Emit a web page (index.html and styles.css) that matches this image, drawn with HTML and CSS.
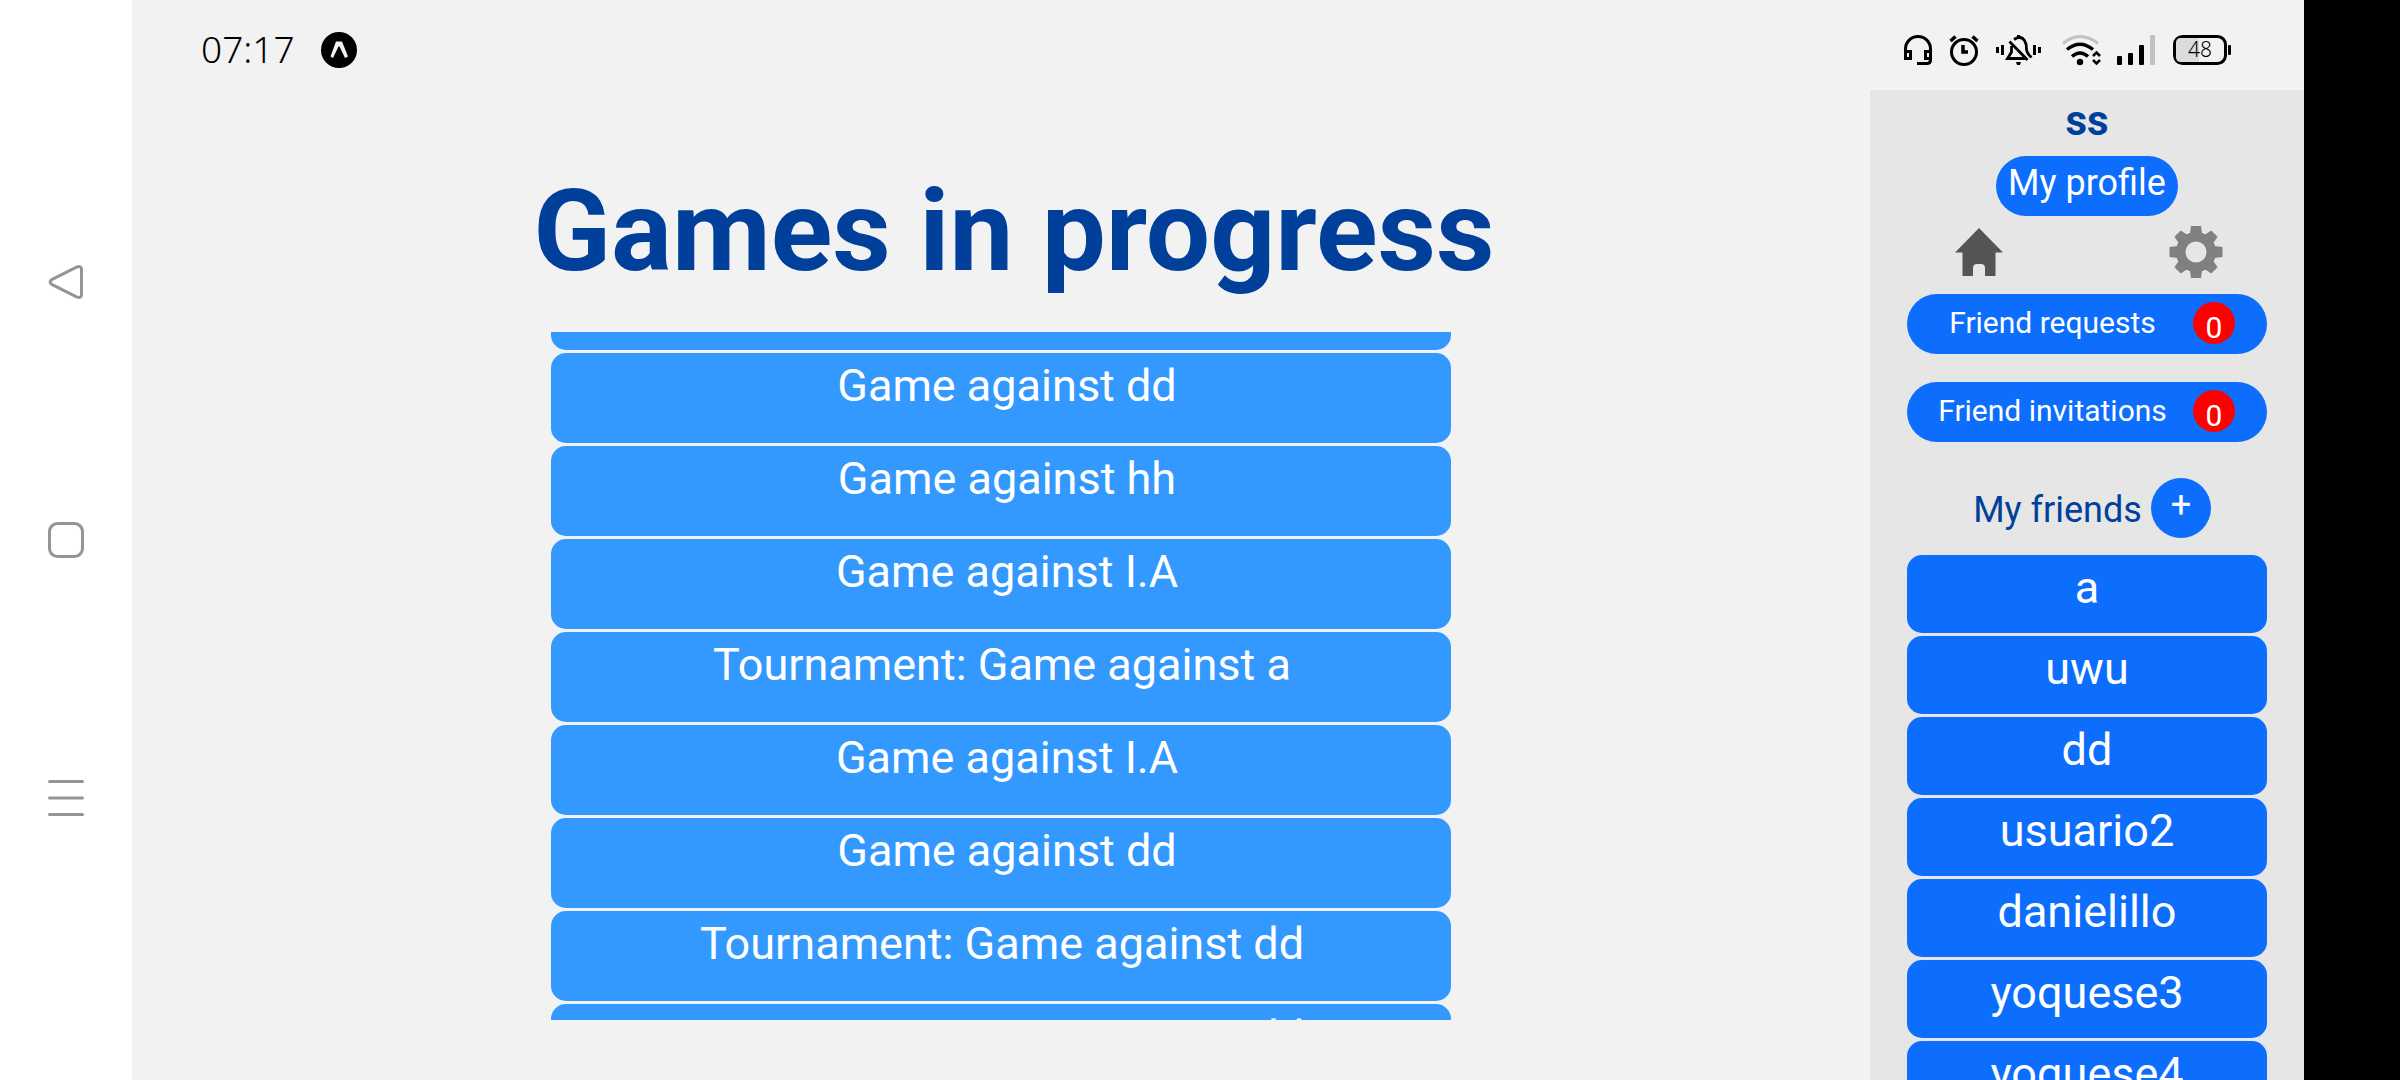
FILE: index.html
```html
<!DOCTYPE html>
<html lang="en">
<head>
<meta charset="utf-8">
<meta name="viewport" content="width=device-width, initial-scale=1">
<title>Games in progress</title>
<link rel="stylesheet" href="styles.css">
</head>
<body>
<div class="device">
  <nav class="system-nav" aria-label="System navigation">
    <button class="system-nav__button" type="button" aria-label="Back">
      <svg width="36" height="36" viewBox="0 0 36 36"><path d="M4.200 15.400 28.500 3.200Q33.500 1.200 33.500 5.500V30.500Q33.500 34.800 28.500 32.800L4.200 20.600Q-.2 18 4.200 15.400Z"/></svg>
    </button>
    <button class="system-nav__button" type="button" aria-label="Home">
      <svg width="36" height="36" viewBox="0 0 36 36"><rect x="1.500" y="1.500" width="33" height="33" rx="8"/></svg>
    </button>
    <button class="system-nav__button" type="button" aria-label="Recent apps">
      <svg width="36" height="36" viewBox="0 0 36 36"><path d="M1.500 1.500h33M1.500 18h33M1.500 34.500h33"/></svg>
    </button>
  </nav>

  <div class="app">
    <header class="status-bar">
      <div class="status-bar__left">
        <span class="status-bar__time">07:17</span>
        <svg width="36" height="36" viewBox="0 0 36 36"><circle cx="18" cy="18" r="18"/><path d="M15 9.500h6L27 24.500 24 26 18.500 14.500h-1L12 26 9.500 24.500Z" fill="#f2f2f2"/></svg>
      </div>
      <svg class="status-bar__icons" width="330" height="36" viewBox="1903 32 330 36" aria-label="Device status">
        <g fill="none" stroke="#000" stroke-width="3">
          <path d="M1905.500 58V49a12 12 0 0 1 25 0V60q0 3-3 3.500H1917"/>
          <path d="M1905.500 51.500h5v7h-5zM1925.500 51.500h5v7h-5z"/>
          <circle cx="1964" cy="52" r="12.500"/>
          <path d="M1963 45v7h5M1950.500 41l5-4.500M1977.500 41l-5-4.500" stroke-width="3.500"/>
          <path d="M1997.500 47v6M2002.500 45v10M2034.500 45v10M2039.500 47v6"/>
          <path d="M2009.500 41.500l18 18.500M2014 39.500q7-4.500 10.500 1 2 3 2 8.500 0 4 5 8.500M2011.500 46v6l-4 6.500H2025" stroke-width="2.800"/>
          <path d="M2063 43.500q17-14 35 0" stroke="#c2c2c2"/>
          <path d="M2067 49.500q13-10.500 26 0M2072 56.500q8-7 16 0" stroke-width="3.500"/>
          <path d="M2093 56l3.500-3.500 3.500 3.500M2093 60l3.500 3.500 3.500-3.500" stroke-width="2.500"/>
          <rect x="2174.500" y="36.500" width="51" height="27" rx="8"/>
        </g>
        <path d="M2016 62h5l-1 3h-3zM2017 35h3v4h-3z"/>
        <circle cx="2080" cy="62" r="3.200"/>
        <rect x="2117" y="56" width="5" height="9" rx="1"/><rect x="2128" y="53" width="5" height="12" rx="1"/><rect x="2139" y="45" width="5" height="20" rx="1"/><rect x="2150" y="35" width="5" height="30" rx="1" fill="#c2c2c2"/>
        <path d="M2199 38h-18q-5 0-5 5v14q0 5 5 5h18z" fill="#dcdcdc"/>
        <rect x="2228" y="45" width="3" height="10" rx="1"/>
        <text class="status-bar__level" x="2200" y="57" text-anchor="middle">48</text>
      </svg>
    </header>

    <main class="games">
      <h1 class="games__title">Games in progress</h1>
      <div class="games__viewport">
        <div class="games__list">
          <button class="game" type="button">Game against dd</button>
          <button class="game" type="button">Game against dd</button>
          <button class="game" type="button">Game against hh</button>
          <button class="game" type="button">Game against I.A</button>
          <button class="game game--tournament" type="button">Tournament: Game against a</button>
          <button class="game" type="button">Game against I.A</button>
          <button class="game" type="button">Game against dd</button>
          <button class="game game--tournament" type="button">Tournament: Game against dd</button>
          <button class="game game--tournament" type="button">Tournament: Game against dd</button>
        </div>
      </div>
    </main>

    <aside class="sidebar">
      <h2 class="sidebar__user">ss</h2>
      <button class="profile" type="button">My profile</button>
      <div class="shortcuts">
        <button class="shortcut" type="button" aria-label="Home">
          <svg width="48" height="48" viewBox="0 0 48 48"><path fill="#555" d="M24 0 48 24.500H40.500V48H30V40q0-4-4-4H22q-4 0-4 4v8H7.500V24.500H0Z"/></svg>
        </button>
        <button class="shortcut" type="button" aria-label="Settings">
          <svg width="54" height="52" viewBox="-27 -26 54 52"><mask id="hub" maskUnits="userSpaceOnUse" x="-30" y="-30" width="60" height="60"><path fill="#fff" d="M-30-30h60v60h-60z"/><circle r="10.500"/></mask><g fill="#808080" mask="url(#hub)"><circle r="20"/><path d="M-5-26H5L6-18V18L5 26H-5L-6 18V-18ZM-26.500-5 -18-6H18L26.500-5V5L18 6H-18L-26.500 5Z"/><path transform="rotate(45)" d="M-4.500-26H4.500L6-18V18L4.500 26H-4.500L-6 18V-18ZM-26-4.500-18-6H18L26-4.500V4.500L18 6H-18L-26 4.500Z"/></g></svg>
        </button>
      </div>
      <div class="requests">
        <button class="request" type="button"><span class="request__label">Friend requests</span><span class="request__count">0</span></button>
        <button class="request" type="button"><span class="request__label">Friend invitations</span><span class="request__count">0</span></button>
      </div>
      <div class="friends-head">
        <h3 class="friends-head__title">My friends</h3>
        <button class="add-friend" type="button" aria-label="Add friend">+</button>
      </div>
      <div class="friends">
        <button class="friend" type="button">a</button>
        <button class="friend" type="button">uwu</button>
        <button class="friend" type="button">dd</button>
        <button class="friend" type="button">usuario2</button>
        <button class="friend" type="button">danielillo</button>
        <button class="friend" type="button">yoquese3</button>
        <button class="friend" type="button">yoquese4</button>
      </div>
    </aside>
  </div>
</div>
</body>
</html>
```
FILE: styles.css
```css
* {
  box-sizing: border-box;
}

body {
  margin: 0;
  background: #000;
  font-family: Roboto, "Liberation Sans", sans-serif;
}

button {
  margin: 0;
  padding: 0;
  border: 0;
  background: none;
  color: #fff;
  font: inherit;
  cursor: pointer;
}

svg {
  display: block;
}

h1,
h2,
h3 {
  margin: 0;
  color: #00409a;
}

.device {
  display: flex;
  height: 100vh;
  padding-right: 96px;
  overflow: hidden;
}

.system-nav {
  display: flex;
  flex: none;
  flex-direction: column;
  align-items: center;
  justify-content: center;
  gap: 174px;
  width: 132px;
  background: #fff;
}

.system-nav__button {
  padding: 24px;
}

.system-nav svg {
  fill: none;
  stroke: #959595;
  stroke-width: 3;
  stroke-linecap: round;
}

.app {
  display: grid;
  flex: 1;
  grid-template: 90px minmax(0, 1fr) / minmax(0, 1fr) 434px;
  min-width: 0;
  background: #f2f2f2;
}

.status-bar {
  display: flex;
  grid-column: 1 / -1;
  align-items: center;
  justify-content: space-between;
  padding: 10px 71px 0 69px;
}

.status-bar__left {
  display: flex;
  align-items: center;
  gap: 26px;
}

.status-bar__time {
  padding-bottom: 2px;
  font-family: "Noto Sans", sans-serif;
  font-size: 37px;
  font-weight: 300;
  line-height: 36px;
}

.status-bar__level {
  font-family: "Noto Sans", sans-serif;
  font-size: 21px;
  font-weight: 300;
}

.games {
  display: flex;
  flex-direction: column;
  align-items: center;
  min-height: 0;
  padding: 74px 24px 60px;
}

.games__title {
  padding-left: 26px;
  font-size: 114px;
  line-height: 134px;
}

.games__viewport {
  flex: 1;
  width: 100%;
  max-width: 900px;
  min-height: 0;
  margin-top: 34px;
  overflow: hidden;
}

.games__list {
  display: flex;
  flex-direction: column;
  gap: 3px;
  margin-top: -72px;
}

.game,
.friend {
  flex: none;
  padding-top: 6px;
  border-radius: 15px;
  font-size: 45px;
  line-height: 53px;
}

.game {
  height: 90px;
  padding-bottom: 31px;
  padding-left: 12px;
  background: #3399ff;
}

.game--tournament {
  padding-left: 2px;
}

.sidebar {
  display: flex;
  flex-direction: column;
  align-items: center;
  min-height: 0;
  padding: 6px 37px 0;
  overflow: hidden;
  background: #e6e6e6;
}

.sidebar > * {
  flex: none;
}

.sidebar__user {
  font-size: 42px;
  line-height: 50px;
}

.profile,
.request,
.add-friend,
.friend {
  background: #0d6efd;
}

.profile {
  height: 60px;
  margin-top: 10px;
  padding: 6px 12px 12px;
  border-radius: 30px;
  font-size: 36px;
  line-height: 42px;
}

.shortcuts {
  display: flex;
  align-self: stretch;
  justify-content: space-around;
  margin: 10px -37px 0;
}

.shortcut {
  display: grid;
  width: 54px;
  height: 52px;
  place-items: center;
}

.requests {
  display: grid;
  align-self: stretch;
  gap: 28px;
  margin-top: 16px;
}

.request {
  display: flex;
  align-items: center;
  height: 60px;
  padding: 0 32px 3px 5px;
  border-radius: 30px;
  font-size: 30px;
  line-height: 36px;
}

.request__label {
  flex: 1;
}

.request__count {
  width: 42px;
  height: 42px;
  padding-top: 8px;
  border-radius: 50%;
  background: #f00;
}

.friends-head {
  display: flex;
  align-items: center;
  gap: 9px;
  margin-top: 36px;
  padding-left: 10px;
}

.friends-head__title {
  padding-top: 4px;
  font-size: 36px;
  font-weight: 400;
  line-height: 42px;
}

.add-friend {
  width: 60px;
  height: 60px;
  padding-bottom: 6px;
  border-radius: 50%;
  font-size: 36px;
  line-height: 42px;
}

.friends {
  display: flex;
  flex-direction: column;
  align-self: stretch;
  gap: 3px;
  margin-top: 17px;
}

.friend {
  height: 78px;
  padding-bottom: 19px;
}
```
